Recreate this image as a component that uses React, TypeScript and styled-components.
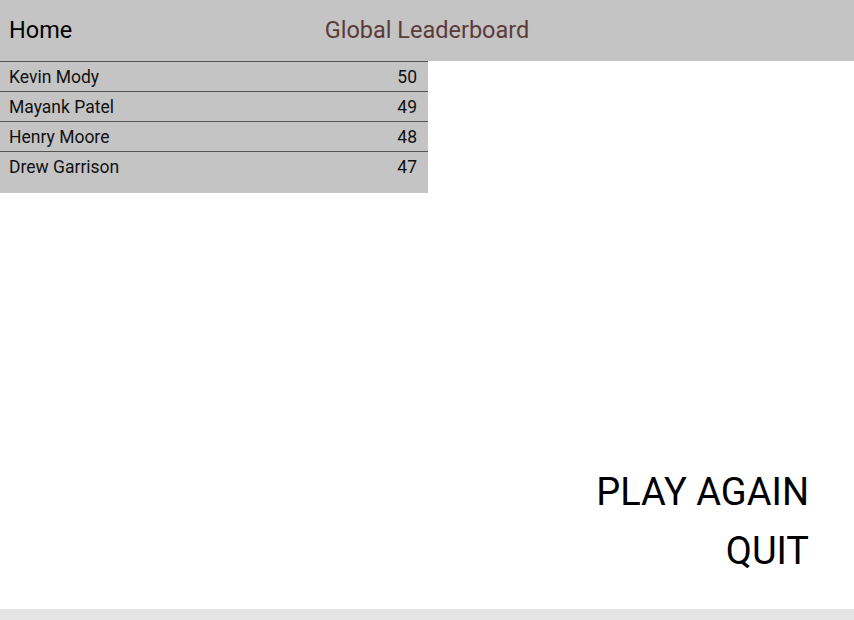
import React from 'react'
import styled, { createGlobalStyle } from 'styled-components'

const GlobalStyle = createGlobalStyle`
    html, body {
        margin: 0;
        padding: 0;
        background: #ffffff;
        font-family: Roboto, 'Liberation Sans', sans-serif;
    }
`

const Page = styled.div`
    display: flex;
    flex-direction: column;
    width: 854px;
    height: 620px;
    overflow: hidden;
`

const Header = styled.header`
    display: grid;
    grid-template-columns: 1fr auto 1fr;
    align-items: center;
    height: 61px;
    flex-shrink: 0;
    padding: 0 9px;
    background-color: #c4c4c4;
`

const HomeLink = styled.a`
    justify-self: start;
    font-size: 23.5px;
    color: #000;
    text-decoration: none;
    padding-bottom: 2px;
`

const Title = styled.h1`
    margin: 0;
    padding-bottom: 2px;
    font-size: 23.5px;
    font-weight: 400;
    color: #5c3a3a;
`

const Board = styled.div`
    width: 428px;
    padding-bottom: 12px;
    background-color: #c4c4c4;
`

const Row = styled.div`
    display: flex;
    justify-content: space-between;
    align-items: center;
    height: 29px;
    padding: 0 11px 0 9px;
    border-top: 1px solid #555;
    font-size: 17.5px;
    color: #111;
`

const Main = styled.main`
    flex: 1;
    display: flex;
    flex-direction: column;
    justify-content: flex-end;
    align-items: flex-end;
    padding: 0 45px 28px 0;
`

const Action = styled.button`
    border: none;
    background: none;
    padding: 0;
    font-family: Roboto, 'Liberation Sans', sans-serif;
    font-size: 38px;
    line-height: 59px;
    color: #000;
    cursor: pointer;
`

const Footer = styled.footer`
    height: 11px;
    flex-shrink: 0;
    background-color: #e5e5e5;
`

const scores = [
    { name: 'Kevin Mody', score: 50 },
    { name: 'Mayank Patel', score: 49 },
    { name: 'Henry Moore', score: 48 },
    { name: 'Drew Garrison', score: 47 },
]

export default function App() {
    return (
        <>
            <GlobalStyle />
            <Page>
                <Header>
                    <HomeLink href="#">Home</HomeLink>
                    <Title>Global Leaderboard</Title>
                </Header>
                <Board>
                    {scores.map((s) => (
                        <Row key={s.name}>
                            <span>{s.name}</span>
                            <span>{s.score}</span>
                        </Row>
                    ))}
                </Board>
                <Main>
                    <Action>PLAY AGAIN</Action>
                    <Action>QUIT</Action>
                </Main>
                <Footer />
            </Page>
        </>
    )
}
